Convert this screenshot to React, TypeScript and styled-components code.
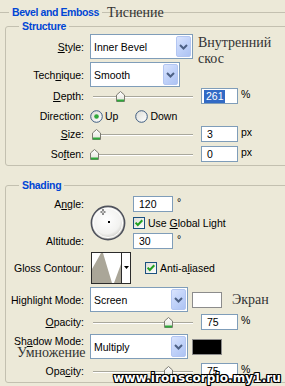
import React from 'react';
import styled, { createGlobalStyle } from 'styled-components';

const GlobalStyle = createGlobalStyle`
  html, body {
    margin: 0;
    padding: 0;
    background: #ece9d8;
    overflow: hidden;
  }
  body {
    font-family: "Liberation Sans", Arial, sans-serif;
    font-size: 10.5px;
    color: #000;
  }
`;

const Page = styled.div`
  position: relative;
  width: 285px;
  height: 386px;
  overflow: hidden;
  background: #ece9d8;
`;

// header of the outer "Bevel and Emboss" group
const TitleRow = styled.div`
  display: flex;
  align-items: center;
  height: 19px;
  padding-top: 6px;
  box-sizing: border-box;
`;

const Rule = styled.div`
  width: 9px;
  height: 1px;
  flex: none;
  background: #c3c0b0;
`;

const Title = styled.span`
  padding: 0 3px;
  font-weight: bold;
  color: #0046d5;
  letter-spacing: -0.4px;
  line-height: 13px;
  white-space: nowrap;
`;

const TitleTail = styled.div`
  flex: 1;
  display: flex;
  align-items: center;
  height: 13px;
  padding-left: 5px;
  background: linear-gradient(#c3c0b0, #c3c0b0) 0 6px / 100% 1px no-repeat;
`;

const Note = styled.span<{ $lh?: number; $ml?: number }>`
  font-family: "Liberation Serif", "Times New Roman", serif;
  font-size: 14px;
  line-height: ${p => p.$lh ?? 16}px;
  color: #333;
  white-space: nowrap;
  margin-left: ${p => p.$ml ?? 0}px;
`;

const StackNote = styled(Note)`
  display: block;
  align-self: flex-start;
  margin-top: 1px;
`;

const Group = styled.fieldset<{ $mt: number; $pb: number }>`
  margin: ${p => p.$mt}px 0 0 5px;
  padding: 0 0 ${p => p.$pb}px 0;
  width: 320px;
  min-width: 0;
  box-sizing: border-box;
  border: 1px solid #c3c0b0;
  border-radius: 3px;
`;

const Legend = styled.legend`
  margin-left: 13px;
  padding: 0 3px;
  font-weight: bold;
  color: #0046d5;
  line-height: 14px;
  letter-spacing: -0.3px;
`;

const Row = styled.div<{ $h: number; $mt?: number }>`
  display: flex;
  align-items: center;
  height: ${p => p.$h}px;
  margin-top: ${p => p.$mt ?? 0}px;
`;

const Label = styled.div`
  width: 78px;
  margin-right: 6px;
  flex: none;
  text-align: right;
  white-space: nowrap;
  line-height: 12px;
`;

const LabelStack = styled.div`
  width: 78px;
  height: 25px;
  margin-right: 6px;
  flex: none;
  display: flex;
  flex-direction: column;
  align-items: flex-end;
  padding-top: 1px;
  box-sizing: border-box;
  line-height: 12px;
  white-space: nowrap;
`;

const UnderNote = styled(Note)`
  align-self: flex-start;
  margin-left: 11px;
`;

const SelectBox = styled.div<{ $w: number }>`
  width: ${p => p.$w}px;
  height: 25px;
  flex: none;
  box-sizing: border-box;
  border: 1px solid #7f9db9;
  background: #fff;
  display: flex;
  align-items: center;
  padding: 0 1px 0 3px;
`;

const SelectText = styled.span`
  flex: 1;
  white-space: nowrap;
`;

const DropButton = styled.div`
  width: 15px;
  height: 21px;
  box-sizing: border-box;
  border: 1px solid #b3c6f2;
  border-radius: 2px;
  background: linear-gradient(135deg, #dae4fd 0%, #c3d4fa 45%, #adc3f3 100%);
  display: flex;
  align-items: center;
  justify-content: center;
`;

const Slider = styled.div<{ $mr?: number }>`
  position: relative;
  width: 103px;
  height: 11px;
  flex: none;
  margin-right: ${p => p.$mr ?? 8}px;

  &::before {
    content: '';
    position: absolute;
    left: 3px;
    right: 0;
    top: 5px;
    height: 1px;
    background: #a9a89c;
    box-shadow: 0 1px 0 #fff;
  }
`;

const ThumbWrap = styled.div`
  position: absolute;
  top: 0;
  width: 9px;
  height: 11px;
  line-height: 0;
`;

const Field = styled.div<{ $w?: number }>`
  width: ${p => p.$w ?? 37}px;
  height: 16px;
  flex: none;
  box-sizing: border-box;
  border: 1px solid #7f9db9;
  background: #fff;
  padding-left: 5px;
  display: flex;
  align-items: center;
  line-height: 13px;
`;

const Selected = styled.span`
  margin-left: -3px;
  padding: 0 1px 0 2px;
  background: #316ac5;
  color: #fff;
`;

const Unit = styled.span<{ $ml?: number }>`
  align-self: flex-start;
  margin-left: ${p => p.$ml ?? 3}px;
  margin-top: 1px;
  line-height: 10px;
`;

const RadioOption = styled.div<{ $mr?: number }>`
  display: flex;
  align-items: center;
  gap: 2px;
  margin-right: ${p => p.$mr ?? 0}px;
  line-height: 12px;
`;

const CheckOption = styled.div<{ $ml?: number }>`
  display: flex;
  align-items: center;
  gap: 3px;
  margin-left: ${p => p.$ml ?? 0}px;
  line-height: 12px;
  white-space: nowrap;
`;

const AngleGrid = styled.div`
  display: grid;
  grid-template-columns: 78px 37px 1fr;
  grid-template-rows: 16px 13px 16px;
  column-gap: 6px;
  row-gap: 4px;
  margin-top: 4px;
`;

const GridLabel = styled(Label)<{ $row: number }>`
  grid-column: 1;
  grid-row: ${p => p.$row};
  align-self: center;
`;

const GridCell = styled.div<{ $row: number }>`
  grid-column: 3;
  grid-row: ${p => p.$row};
  display: flex;
  align-items: center;
`;

const DialCell = styled.div`
  grid-column: 2;
  grid-row: 1 / 4;
  align-self: center;
  line-height: 0;
`;

const ContourBox = styled.div`
  margin-left: 1px;
  flex: none;
  line-height: 0;
`;

const Swatch = styled.div<{ $color: string }>`
  width: 30px;
  height: 16px;
  flex: none;
  box-sizing: border-box;
  margin-left: 4px;
  border: 1px solid #8c8c8c;
  background: ${p => p.$color};
`;

const Watermark = styled.div`
  position: absolute;
  right: 4px;
  bottom: 1px;
  font-family: "DejaVu Sans", Verdana, sans-serif;
  font-weight: bold;
  font-size: 12px;
  line-height: 14px;
  color: #fff;
  letter-spacing: 0.1px;
  text-shadow:
    1px 0 0 #000, -1px 0 0 #000, 0 1px 0 #000, 0 -1px 0 #000,
    1px 1px 0 #000, -1px -1px 0 #000, 1px -1px 0 #000, -1px 1px 0 #000;
`;

const Chevron = () => (
  <svg width="9" height="6" viewBox="0 0 9 6">
    <path d="M1 1 L4.5 4.5 L8 1" fill="none" stroke="#4d6185" strokeWidth="2" />
  </svg>
);

const Select = ({ w, value }: { w: number; value: string }) => (
  <SelectBox $w={w}>
    <SelectText>{value}</SelectText>
    <DropButton>
      <Chevron />
    </DropButton>
  </SelectBox>
);

const Thumb = () => (
  <svg width="9" height="11" viewBox="0 0 9 11">
    <defs>
      <linearGradient id="thumbFill" x1="0" y1="0" x2="0" y2="1">
        <stop offset="0" stopColor="#ffffff" />
        <stop offset="1" stopColor="#e4e3da" />
      </linearGradient>
    </defs>
    <path d="M0.5 4 L4.5 0.5 L8.5 4 V10.5 H0.5 Z" fill="url(#thumbFill)" stroke="#7d7c72" />
    <rect x="1" y="8.5" width="7" height="2" fill="#2fa83a" />
  </svg>
);

const SliderBar = ({ pos }: { pos: number }) => (
  <Slider>
    <ThumbWrap style={{ left: pos }}>
      <Thumb />
    </ThumbWrap>
  </Slider>
);

const Radio = ({ on }: { on?: boolean }) => (
  <svg width="13" height="13" viewBox="0 0 13 13">
    <defs>
      <linearGradient id="radioFill" x1="0" y1="0" x2="1" y2="1">
        <stop offset="0" stopColor="#dcdcd6" />
        <stop offset="1" stopColor="#ffffff" />
      </linearGradient>
    </defs>
    <circle cx="6.5" cy="6.5" r="5.8" fill="url(#radioFill)" stroke="#3d5c80" strokeWidth="1" />
    {on && <circle cx="6.5" cy="6.5" r="2.3" fill="#2fa83a" />}
  </svg>
);

const Checkbox = () => (
  <svg width="12" height="12" viewBox="0 0 12 12">
    <defs>
      <linearGradient id="checkFill" x1="0" y1="0" x2="1" y2="1">
        <stop offset="0" stopColor="#dcdcd6" />
        <stop offset="1" stopColor="#ffffff" />
      </linearGradient>
    </defs>
    <rect x="0.5" y="0.5" width="11" height="11" fill="url(#checkFill)" stroke="#1c5180" />
    <path d="M2.6 5.6 L4.8 8 L9.3 3.2" fill="none" stroke="#21a121" strokeWidth="2" />
  </svg>
);

const Dial = () => (
  <svg width="36" height="36" viewBox="0 0 36 36">
    <defs>
      <radialGradient id="dialFill" cx="0.45" cy="0.4" r="0.6">
        <stop offset="0" stopColor="#ffffff" />
        <stop offset="0.7" stopColor="#f2f2f0" />
        <stop offset="1" stopColor="#c9c8c2" />
      </radialGradient>
    </defs>
    <circle cx="18" cy="18" r="16.6" fill="url(#dialFill)" stroke="#4f525c" strokeWidth="1.6" />
    <circle cx="18" cy="18" r="14.6" fill="none" stroke="#ffffff" strokeWidth="1" />
    <g fill="#222">
      <rect x="12.5" y="4" width="1" height="2" />
      <rect x="12.5" y="8" width="1" height="2" />
      <rect x="10.5" y="6.5" width="2" height="1" />
      <rect x="13.5" y="6.5" width="2" height="1" />
    </g>
    <rect x="18" y="16" width="2" height="2" fill="#000" />
  </svg>
);

const Contour = () => (
  <svg width="40" height="32" viewBox="0 0 40 32">
    <rect x="0.5" y="0.5" width="39" height="31" fill="#fff" stroke="#2b2b2b" />
    <polygon points="1,31 1,17 10,1 12,1 21,31 23,31 30,12 30,31" fill="#aaa698" />
    <line x1="30.5" y1="1" x2="30.5" y2="31" stroke="#2b2b2b" />
    <polygon points="33,14 38,14 35.5,17" fill="#000" />
  </svg>
);

export default function App() {
  return (
    <Page>
      <GlobalStyle />
      <TitleRow>
        <Rule />
        <Title>Bevel and Emboss</Title>
        <TitleTail>
          <Note>Тиснение</Note>
        </TitleTail>
      </TitleRow>

      <Group $mt={0} $pb={3}>
        <Legend>Structure</Legend>
        <Row $h={25} $mt={1}>
          <Label><u>S</u>tyle:</Label>
          <Select w={103} value="Inner Bevel" />
          <StackNote $ml={5}>
            Внутренний
            <br />
            скос
          </StackNote>
        </Row>
        <Row $h={25} $mt={3}>
          <Label>Tech<u>n</u>ique:</Label>
          <Select w={90} value="Smooth" />
        </Row>
        <Row $h={16} $mt={1}>
          <Label><u>D</u>epth:</Label>
          <SliderBar pos={26} />
          <Field>
            <Selected>261</Selected>
          </Field>
          <Unit>%</Unit>
        </Row>
        <Row $h={16} $mt={4}>
          <Label>Direction:</Label>
          <RadioOption $mr={17}>
            <Radio on />
            <span>Up</span>
          </RadioOption>
          <RadioOption>
            <Radio />
            <span>Down</span>
          </RadioOption>
        </Row>
        <Row $h={16} $mt={2}>
          <Label><u>S</u>ize:</Label>
          <SliderBar pos={2} />
          <Field>3</Field>
          <Unit>px</Unit>
        </Row>
        <Row $h={16} $mt={4}>
          <Label>So<u>f</u>ten:</Label>
          <SliderBar pos={0} />
          <Field>0</Field>
          <Unit>px</Unit>
        </Row>
      </Group>

      <Group $mt={12} $pb={3}>
        <Legend>Shading</Legend>
        <AngleGrid>
          <GridLabel $row={1}>A<u>n</u>gle:</GridLabel>
          <DialCell>
            <Dial />
          </DialCell>
          <GridCell $row={1}>
            <Field $w={40}>120</Field>
            <Unit $ml={4}>°</Unit>
          </GridCell>
          <GridCell $row={2}>
            <CheckOption>
              <Checkbox />
              <span>Use <u>G</u>lobal Light</span>
            </CheckOption>
          </GridCell>
          <GridLabel $row={3}>Altitude:</GridLabel>
          <GridCell $row={3}>
            <Field $w={40}>30</Field>
            <Unit $ml={4}>°</Unit>
          </GridCell>
        </AngleGrid>
        <Row $h={32} $mt={3}>
          <Label>Gloss Contour:</Label>
          <ContourBox>
            <Contour />
          </ContourBox>
          <CheckOption $ml={14}>
            <Checkbox />
            <span>Anti-a<u>l</u>iased</span>
          </CheckOption>
        </Row>
        <Row $h={25} $mt={3}>
          <Label>Hi<u>g</u>hlight Mode:</Label>
          <Select w={98} value="Screen" />
          <Swatch $color="#ffffff" />
          <Note $ml={10}>Экран</Note>
        </Row>
        <Row $h={16} $mt={2}>
          <Label><u>O</u>pacity:</Label>
          <SliderBar pos={74} />
          <Field>75</Field>
          <Unit>%</Unit>
        </Row>
        <Row $h={25} $mt={4}>
          <LabelStack>
            <span>Sh<u>a</u>dow Mode:</span>
            <UnderNote $lh={12}>Умножение</UnderNote>
          </LabelStack>
          <Select w={98} value="Multiply" />
          <Swatch $color="#000000" />
        </Row>
        <Row $h={16} $mt={4}>
          <Label>Opa<u>c</u>ity:</Label>
          <SliderBar pos={74} />
          <Field>75</Field>
          <Unit>%</Unit>
        </Row>
      </Group>

      <Watermark>www.ironscorpio.my1.ru</Watermark>
    </Page>
  );
}
